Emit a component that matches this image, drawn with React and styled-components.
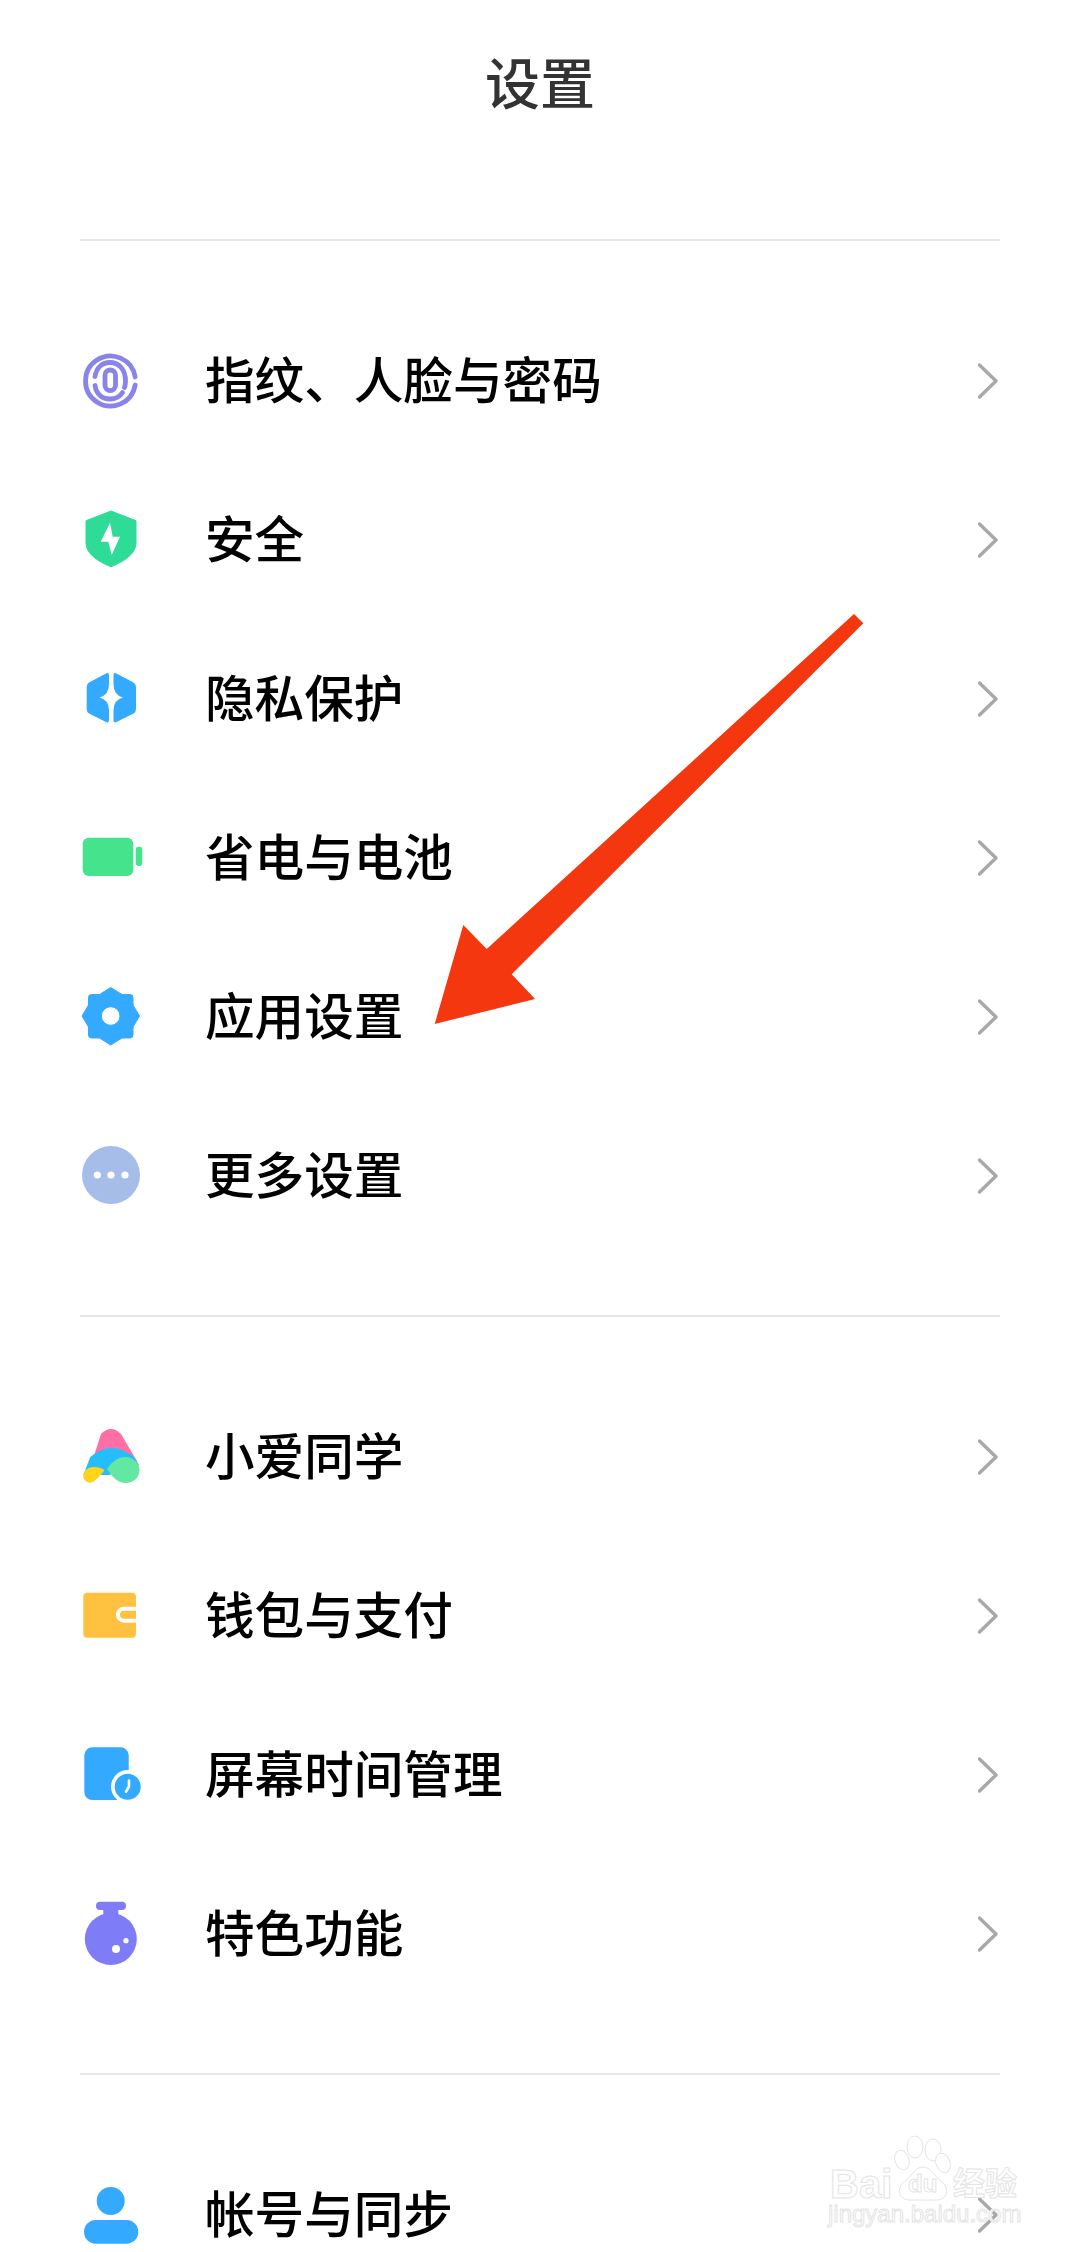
import React from 'react'
import styled, { createGlobalStyle } from 'styled-components'

const GlobalStyle = createGlobalStyle`
  html, body { margin: 0; padding: 0; background: #fff; }
  body { font-family: "Noto Sans CJK SC", "Noto Sans", sans-serif; }
`

const Page = styled.div`
  position: relative;
  width: 1080px;
  height: 2252px;
  overflow: hidden;
  background: #fff;
`

const TitleBar = styled.header`
  height: 166px;
  margin-bottom: 73px;
  display: flex;
  justify-content: center;
  align-items: center;
`

const Title = styled.h1`
  margin: 0;
  padding-bottom: 5px;
  font-size: 55px;
  font-weight: 500;
  color: #333;
  line-height: 1;
`

const Section = styled.section`
  margin: 0 80px;
  padding: 60px 0;
  border-top: 2px solid #e6e6e6;
`

const Row = styled.div`
  height: 159px;
  display: flex;
  align-items: center;
`

const IconBox = styled.div`
  width: 64px;
  height: 64px;
  flex: none;
  svg { display: block; overflow: visible; }
`

const Label = styled.span`
  margin-left: 61px;
  padding-bottom: 5px;
  flex: 1;
  font-size: 49.6px;
  font-weight: 500;
  color: #000;
  line-height: 1;
`

const Chevron = styled.svg`
  flex: none;
  display: block;
`

const Arrow = styled.svg`
  position: absolute;
  left: 0;
  top: 0;
`

const Watermark = styled.div`
  position: absolute;
  left: 826px;
  top: 2134px;
  width: 200px;
  height: 96px;
  color: #fff;
  -webkit-text-stroke: 1px #e4e4e4;
`

const Paw = styled.svg`
  position: absolute;
  left: 0;
  top: 0;
`

const WatermarkBrand = styled.span`
  position: absolute;
  font-family: "Liberation Sans", sans-serif;
  font-weight: 700;
  line-height: 0.9;
  left: ${p => p.$left}px;
  top: ${p => p.$top}px;
  font-size: ${p => p.$size}px;
`

const WatermarkCn = styled.span`
  position: absolute;
  left: 127px;
  top: 31px;
  font-size: 32px;
  font-weight: 700;
  line-height: 1;
  white-space: nowrap;
`

const WatermarkUrl = styled.span`
  position: absolute;
  left: 2px;
  top: 68px;
  font-family: "Liberation Sans", sans-serif;
  font-size: 24px;
  line-height: 1;
  white-space: nowrap;
`

const Svg = ({ children }) => (
  <svg width="64" height="64" viewBox="1 0 64 64">{children}</svg>
)

const FingerprintIcon = () => (
  <Svg>
    <g fill="none" stroke="#8a84ea" strokeWidth="4.800" strokeLinecap="round">
      <path d="M56.200 28A25 25 0 1 0 56.200 36" />
      <path d="M16 27.500C17.500 18 23.500 13.500 31 13.500 39.500 13.500 46.500 20 46.500 32 46.500 35 46 37 45.500 38.500" />
      <path d="M16 36.500C17.500 45.500 23.500 50 31 50 36.500 50 41 47.500 43.500 43.500" />
      <rect x="26" y="21" width="10.500" height="20.500" rx="5.200" />
    </g>
  </Svg>
)

const ShieldIcon = () => (
  <Svg>
    <path d="M32 3 57 12.700V35C57 46 44 54 32 58.700 20 54 7 46 7 35V12.700Z" fill="#2fdc97" stroke="#2fdc97" strokeLinejoin="round" />
    <path d="M31 14.700 21.700 33.700H29.300L32.700 47 41 28.700H33.700Z" fill="#fff" />
  </Svg>
)

const PrivacyIcon = () => (
  <Svg>
    <path d="M27 6.500Q30 5 30 8V17Q30 28 20.500 30.500 30 33 30 43V53Q30 56.500 27 55L10 46.500Q7.700 45 7.700 42V20Q7.700 17 10 15.500Z" fill="#33aaff" />
    <path d="M37.500 6.500Q34.500 5 34.500 8V17Q34.500 28 44 30.500 34.500 33 34.500 43V53Q34.500 56.500 37.500 55L54.500 46.500Q57 45 57 42V20Q57 17 54.500 15.500Z" fill="#33aaff" />
  </Svg>
)

const BatteryIcon = () => (
  <Svg>
    <rect x="3.700" y="11.700" width="50.600" height="38.300" rx="6" fill="#45e48c" />
    <rect x="56.700" y="20.700" width="6.600" height="19.300" rx="3" fill="#45e48c" />
  </Svg>
)

const GearIcon = () => (
  <Svg>
    <path fillRule="evenodd" d="M31.700 2.500 43 9.500H51A3 3 0 0 1 54 12.500V20L60.500 31 54 42V50A3 3 0 0 1 51 53H43L31.700 60 20.500 53H12.500A3 3 0 0 1 9.500 50V42L3 31 9.500 20V12.500A3 3 0 0 1 12.500 9.500H20.500ZM31.700 21.700A9.300 9.300 0 1 0 31.700 40.300 9.300 9.300 0 0 0 31.700 21.700Z" fill="#33aaff" stroke="#33aaff" strokeWidth="1" strokeLinejoin="round" />
  </Svg>
)

const MoreIcon = () => (
  <Svg>
    <circle cx="32" cy="31" r="29" fill="#a6bde9" />
    <circle cx="18.300" cy="31" r="3.600" fill="#fff" />
    <circle cx="32" cy="31" r="3.600" fill="#fff" />
    <circle cx="46" cy="31" r="3.600" fill="#fff" />
  </Svg>
)

const AssistantIcon = () => (
  <Svg>
    <path d="M22 9Q32-1 42 9L58.500 37 12 40Z" fill="#ff6ea5" />
    <path d="M11.300 32Q32 14 55 32L60 40 30 50 4.300 50Z" fill="#26bdfb" />
    <path d="M28 44Q36 32 46 32C54 32 60.500 38 60.500 45 60.500 53 54 58 47 58 38 58 34 52 28 44Z" fill="#62e8a2" />
    <path d="M4.300 50C5 45 10 42 15 42 19 42 23 43 25.500 45 22 50 19 53 16 55.500 11 60 4 57 4.300 50Z" fill="#ffd31e" />
  </Svg>
)

const WalletIcon = () => (
  <Svg>
    <rect x="4.300" y="8.700" width="52.700" height="45" rx="4" fill="#ffc13f" />
    <path d="M57 24.700H45A6 6 0 0 0 45 36.700H57" fill="none" stroke="#fff" strokeWidth="4" />
  </Svg>
)

const ScreenTimeIcon = () => (
  <Svg>
    <rect x="5.300" y="4.300" width="44.400" height="52.700" rx="8" fill="#33aaff" />
    <circle cx="48.700" cy="43.700" r="16.700" fill="#fff" />
    <circle cx="48.700" cy="43.700" r="13" fill="#33aaff" />
    <path d="M50 37.500V43.500L47 48.700" fill="none" stroke="#fff" strokeWidth="2.600" strokeLinecap="round" strokeLinejoin="round" />
  </Svg>
)

const FlaskIcon = () => (
  <Svg>
    <rect x="17" y="-0.300" width="30" height="8.300" rx="4" fill="#7f7cf8" />
    <rect x="24.300" y="6" width="15" height="8" fill="#7f7cf8" />
    <circle cx="31.800" cy="37" r="26" fill="#7f7cf8" />
    <circle cx="37" cy="47" r="4" fill="#fff" />
    <circle cx="47" cy="38.700" r="2.600" fill="#fff" />
  </Svg>
)

const AccountIcon = () => (
  <Svg>
    <circle cx="31.700" cy="18" r="14" fill="#33aaff" />
    <rect x="5" y="37" width="54.300" height="23.700" rx="11.800" fill="#33aaff" />
  </Svg>
)

const RowChevron = () => (
  <Chevron width="22" height="40" viewBox="0 0 22 40">
    <path d="M1.500 4 18 20 1.500 36" fill="none" stroke="#a8a8a8" strokeWidth="3.400" strokeLinecap="round" strokeLinejoin="round" />
  </Chevron>
)

const sections = [
  [
    { label: '指纹、人脸与密码', Icon: FingerprintIcon },
    { label: '安全', Icon: ShieldIcon },
    { label: '隐私保护', Icon: PrivacyIcon },
    { label: '省电与电池', Icon: BatteryIcon },
    { label: '应用设置', Icon: GearIcon },
    { label: '更多设置', Icon: MoreIcon },
  ],
  [
    { label: '小爱同学', Icon: AssistantIcon },
    { label: '钱包与支付', Icon: WalletIcon },
    { label: '屏幕时间管理', Icon: ScreenTimeIcon },
    { label: '特色功能', Icon: FlaskIcon },
  ],
  [{ label: '帐号与同步', Icon: AccountIcon }],
]

export default function App() {
  return (
    <Page>
      <GlobalStyle />
      <TitleBar>
        <Title>设置</Title>
      </TitleBar>
      {sections.map((rows, i) => (
        <Section key={i}>
          {rows.map(({ label, Icon }) => (
            <Row key={label}>
              <IconBox><Icon /></IconBox>
              <Label>{label}</Label>
              <RowChevron />
            </Row>
          ))}
        </Section>
      ))}

      {/* red annotation arrow */}
      <Arrow width="1080" height="2252" viewBox="0 0 1080 2252">
        <path d="M854 614 863.300 623.300 511.700 974.300 535 999 434.700 1024 463.300 925 486.700 949Z" fill="#f53710" />
      </Arrow>

      {/* baidu jingyan watermark */}
      <Watermark>
        <Paw width="200" height="96" viewBox="0 0 200 96">
          <g fill="#fff" stroke="#e4e4e4" strokeWidth="1">
            <ellipse cx="89" cy="13" rx="8" ry="11" />
            <ellipse cx="107" cy="16" rx="8" ry="11" />
            <ellipse cx="76" cy="26" rx="7" ry="10" transform="rotate(-20 76 26)" />
            <ellipse cx="117" cy="29" rx="7" ry="10" transform="rotate(-20 117 29)" />
            <path d="M97 33C105 33 108 42 115 47 124 54 122 66 110 66H84C72 66 70 54 79 47 86 42 89 33 97 33Z" />
          </g>
        </Paw>
        <WatermarkBrand $left={4} $top={32} $size={40}>Bai</WatermarkBrand>
        <WatermarkBrand $left={82} $top={39} $size={24}>du</WatermarkBrand>
        <WatermarkCn>经验</WatermarkCn>
        <WatermarkUrl>jingyan.baidu.com</WatermarkUrl>
      </Watermark>
    </Page>
  )
}
